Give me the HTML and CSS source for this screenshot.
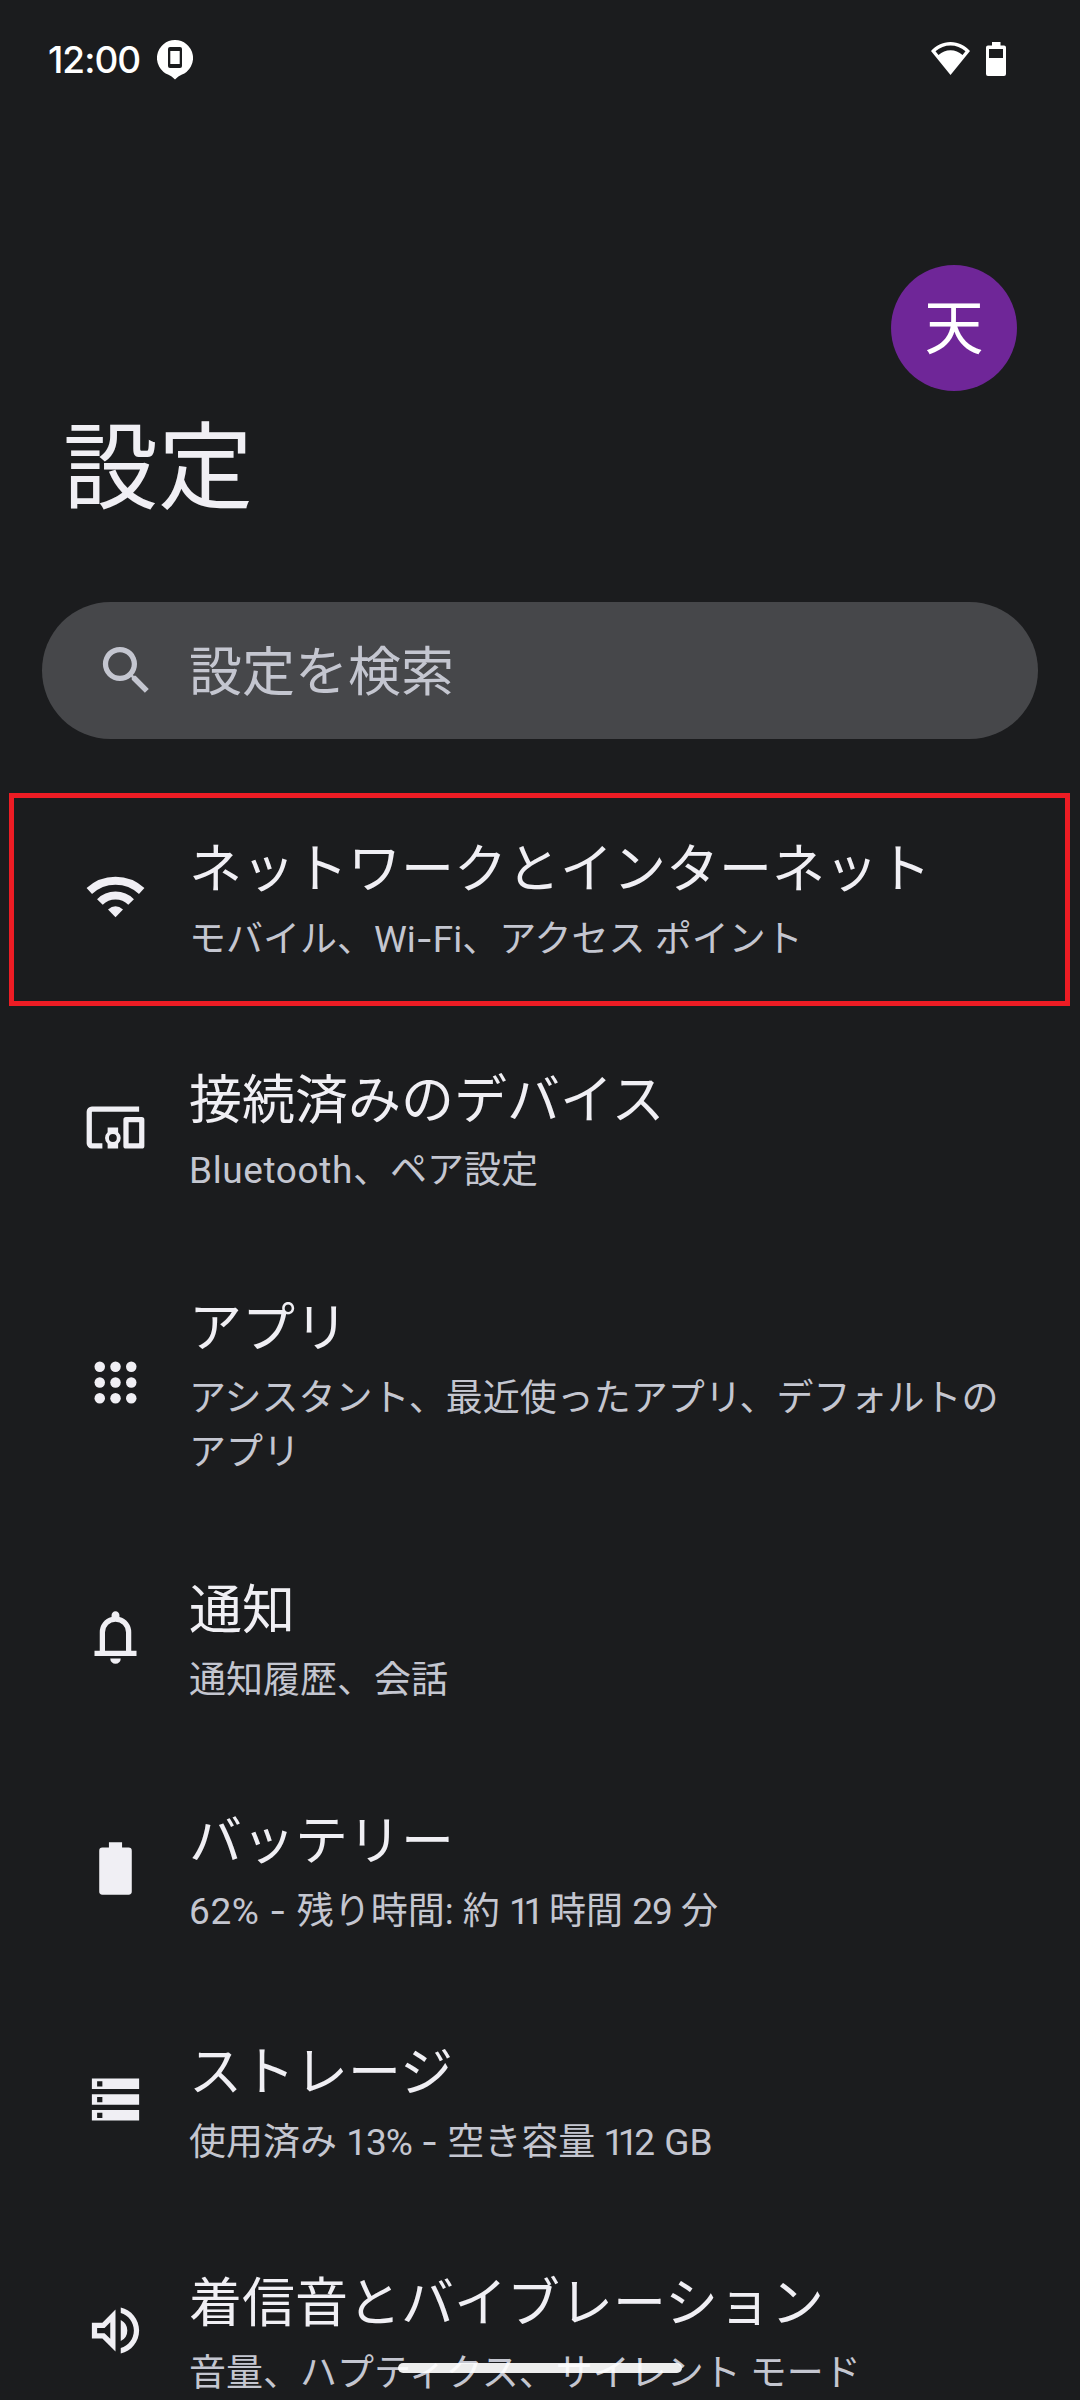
FILE: index.html
```html
<!DOCTYPE html>
<html lang="ja">
<head>
<meta charset="utf-8">
<title>設定</title>
<link rel="stylesheet" href="styles.css">
</head>
<body>
<div class="screen">
  <header class="status">
    <div class="status-left">
      <span class="clock">12:00</span>
      <svg class="pin" width="36" height="40" viewBox="0 0 36 40"><path fill="#fff" d="M18 0a18 18 0 0 1 6.500 34.800Q21.500 36 18 39.500 14.500 36 11.500 34.800A18 18 0 0 1 18 0z"/><rect x="11" y="7" width="14" height="21" rx="2" fill="#1b1c1e"/><rect x="13.300" y="11" width="9.400" height="13" fill="#fff"/></svg>
    </div>
    <div class="status-right">
      <svg width="39" height="34" viewBox="0 0 39 34"><path fill="#fff" fill-rule="evenodd" d="M19.500 0C11.500 0 5 3.500 0 9l19.500 24L39 9C34 3.500 27.500 0 19.500 0zM4.500 9.300C9 5.500 14 3.600 19.500 3.600S30 5.500 34.500 9.300L31.500 13C28 9.800 24 8.200 19.500 8.200S11 9.800 7.500 13z"/></svg>
      <svg width="20" height="34" viewBox="0 0 20 34"><path fill="#fff" fill-rule="evenodd" d="M6 0h8.500v3.500H18a2 2 0 0 1 2 2V32a2 2 0 0 1-2 2H2a2 2 0 0 1-2-2V5.500a2 2 0 0 1 2-2h4zM3 7v9h14V7z"/></svg>
    </div>
  </header>
  <div class="account"><div class="avatar">天</div></div>
  <h1 class="title">設定</h1>
  <div class="search">
    <svg class="icon" viewBox="0 0 24 24"><path d="M15.500 14h-.79l-.28-.27A6.471 6.471 0 0 0 16 9.500 6.500 6.500 0 1 0 9.500 16c1.610 0 3.090-.59 4.230-1.570l.27.28v.79l5 4.990L20.490 19l-4.990-5zm-6 0C7.010 14 5 11.990 5 9.500S7.010 5 9.500 5 14 7.010 14 9.500 11.990 14 9.500 14z"/></svg>
    <span class="search-label">設定を検索</span>
  </div>
  <main class="list">
    <section class="row highlighted">
      <svg class="icon" viewBox="0 0 63 63"><g fill="none" stroke="#f0eff4" stroke-width="8"><path d="M5.300 26A38.500 38.500 0 0 1 57.700 26"/><path d="M15.900 37A22 22 0 0 1 47.100 37"/></g><path d="M24 44.500Q31.500 38 39 44.500L31.500 52.300z"/></svg>
      <div class="text"><div class="name">ネットワークとインターネット</div><div class="summary">モバイル、Wi<span class="dash">-</span>Fi、アクセス ポイント</div></div>
    </section>
    <section class="row">
      <svg class="icon" viewBox="0 0 24 24"><path fill-rule="evenodd" d="M3 4h18v2H3v12h4v2H3a2 2 0 0 1-2-2V6a2 2 0 0 1 2-2zM16 8h6a1 1 0 0 1 1 1v10a1 1 0 0 1-1 1h-6a1 1 0 0 1-1-1V9a1 1 0 0 1 1-1zm1 2v8h4v-8zM9 12h4v1.780a3 3 0 0 1 0 4.440V20H9v-1.780a3 3 0 0 1 0-4.440zm2 2.500a1.500 1.500 0 1 0 0 3 1.500 1.500 0 0 0 0-3z"/></svg>
      <div class="text"><div class="name">接続済みのデバイス</div><div class="summary"><span class="loose">Bluetooth</span>、ペア設定</div></div>
    </section>
    <section class="row tall">
      <svg class="icon" viewBox="0 0 24 24"><circle cx="6" cy="6" r="2"/><circle cx="12" cy="6" r="2"/><circle cx="18" cy="6" r="2"/><circle cx="6" cy="12" r="2"/><circle cx="12" cy="12" r="2"/><circle cx="18" cy="12" r="2"/><circle cx="6" cy="18" r="2"/><circle cx="12" cy="18" r="2"/><circle cx="18" cy="18" r="2"/></svg>
      <div class="text"><div class="name">アプリ</div><div class="summary">アシスタント、最近使ったアプリ、デフォルトの<br>アプリ</div></div>
    </section>
    <section class="row">
      <svg class="icon" viewBox="0 -960 960 960"><path d="M160-200v-80h80v-280q0-83 50-147.500T420-792v-28q0-25 17.500-42.500T480-880q25 0 42.500 17.500T540-820v28q80 20 130 84.500T720-560v280h80v80H160Zm320 120q-33 0-56.500-23.500T400-160h160q0 33-23.500 56.500T480-80ZM320-280h320v-280q0-66-47-113t-113-47q-66 0-113 47t-47 113v280Z"/></svg>
      <div class="text"><div class="name">通知</div><div class="summary">通知履歴、会話</div></div>
    </section>
    <section class="row">
      <svg class="icon" viewBox="0 0 24 24"><path d="M9.500 2h5v2H17a1.200 1.200 0 0 1 1.200 1.200v15.600A1.200 1.200 0 0 1 17 22H7a1.200 1.200 0 0 1-1.200-1.200V5.200A1.200 1.200 0 0 1 7 4h2.500z"/></svg>
      <div class="text"><div class="name">バッテリー</div><div class="summary"><span class="loose">62% <span class="dash">-</span> </span>残り時間: 約 <span class="ones minutes">11</span> 時間 <span class="snug">29</span> 分</div></div>
    </section>
    <section class="row">
      <svg class="icon" viewBox="0 0 24 24"><path fill-rule="evenodd" d="M3 4h18v4H3zm2 1v2h2V5zM3 10h18v4H3zm2 1v2h2v-2zM3 16h18v4H3zm2 1v2h2v-2z"/></svg>
      <div class="text"><div class="name">ストレージ</div><div class="summary">使用済み <span class="snug">13%</span> <span class="dash">-</span> 空き容量 <span class="ones pulled">11</span>2 GB</div></div>
    </section>
    <section class="row">
      <svg class="icon" viewBox="0 0 24 24"><path d="M3 9v6h4l5 5V4L7 9H3zm7-.17v6.340L7.830 13H5v-2h2.830L10 8.830zM16.500 12A4.500 4.500 0 0 0 14 7.970v8.050A4.470 4.470 0 0 0 16.500 12zM14 3.230v2.060c2.890.86 5 3.540 5 6.710s-2.110 5.850-5 6.710v2.060c4.010-.91 7-4.490 7-8.770s-2.990-7.860-7-8.770z"/></svg>
      <div class="text"><div class="name">着信音とバイブレーション</div><div class="summary">音量、ハプティクス、サイレント モード</div></div>
    </section>
  </main>
  <div class="home-bar"></div>
</div>
</body>
</html>
```
FILE: styles.css
```css
* { box-sizing: border-box; }
body { margin: 0; background: #1b1c1e; }
.screen {
  position: relative;
  display: flex;
  flex-direction: column;
  width: 1080px;
  height: 2400px;
  overflow: hidden;
  background: #1b1c1e;
  color: #f0eff4;
  font-family: Roboto, "Noto Sans CJK JP", sans-serif;
}
.status {
  display: flex;
  flex: none;
  justify-content: space-between;
  align-items: flex-start;
  height: 265px;
  padding: 40px 74px 0 48px;
  color: #fff;
}
.status-left { display: flex; gap: 18px; }
.clock { width: 91px; font-family: Inter, sans-serif; font-size: 37px; font-weight: 500; line-height: 39px; letter-spacing: -1px; white-space: nowrap; }
.status-right { display: flex; gap: 16px; padding-top: 2px; }
.account { display: flex; flex: none; justify-content: flex-end; padding-right: 63px; }
.avatar {
  width: 126px;
  height: 126px;
  border-radius: 50%;
  background: #6f2698;
  color: #fff;
  font-size: 59px;
  line-height: 127px;
  text-align: center;
}
.title { flex: none; margin: 0; padding-left: 63px; height: 211px; font-size: 95px; line-height: 158px; font-weight: 400; }
.search {
  display: flex;
  align-items: center;
  gap: 31px;
  flex: none;
  height: 137px;
  margin: 0 42px;
  padding-left: 53px;
  border-radius: 69px;
  background: #46474a;
  color: #c4c6d0;
  font-size: 53px;
}
.search-label { padding-top: 4px; line-height: 78px; }
.icon { display: block; flex: none; width: 63px; height: 63px; fill: #f0eff4; }
.search .icon { fill: #c4c6d0; }
.list { display: flex; flex: none; flex-direction: column; padding-top: 42px; }
.row {
  position: relative;
  display: flex;
  flex: none;
  align-items: center;
  gap: 42px;
  height: 231px;
  padding-left: 84px;
}
.tall { height: 279px; }
.highlighted::after {
  content: "";
  position: absolute;
  inset: 12px 10px 6px 9px;
  border: 5px solid #ed1c24;
}
.text { padding-top: 3px; }
.name { padding-bottom: 2px; font-size: 53px; line-height: 81px; white-space: nowrap; }
.summary { color: #c4c6d0; font-size: 37px; line-height: 54px; white-space: nowrap; }
.dash { font-family: Inter, sans-serif; line-height: 1; }
.loose { letter-spacing: .6px; }
.snug { letter-spacing: -1px; }
.ones { letter-spacing: -6.4px; }
.minutes { margin-right: 2px; }
.pulled { margin-left: -1px; margin-right: 2px; }
.home-bar {
  position: absolute;
  left: 398px;
  top: 2363px;
  width: 284px;
  height: 10px;
  border-radius: 5px;
  background: rgba(255, 255, 255, .92);
}
```
